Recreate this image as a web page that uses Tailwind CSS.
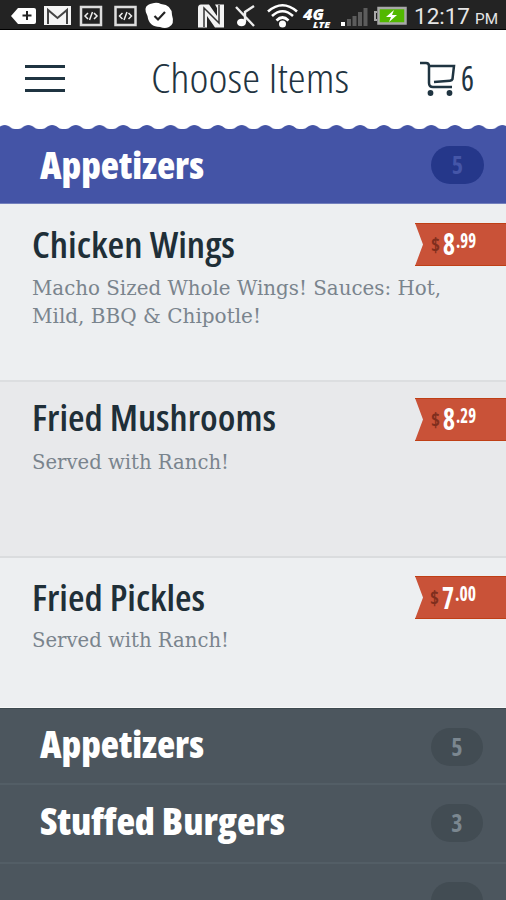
<!DOCTYPE html>
<html lang="en">
<head>
    <meta charset="UTF-8">
    <meta name="viewport" content="width=device-width, initial-scale=1.0">
    <title>Choose Items</title>
    <script src="https://cdn.jsdelivr.net/npm/@tailwindcss/browser@4"></script>
</head>
<body class="w-[506px] h-[900px] overflow-hidden bg-[#4c565e] font-['Open_Sans',sans-serif]">

    <!-- Status bar -->
    <div class="h-[30px] bg-[#232323] border-b border-black flex items-center">
        <svg class="w-[410px] h-[30px] shrink-0 overflow-visible" viewBox="0 0 410 30">
            <path d="M11 16 L18 8 H34 Q36 8 36 10 V22 Q36 24 34 24 H18 Z" fill="#fff"/>
            <path d="M27 11 V20 M22.500 15.500 H31.500" stroke="#222" stroke-width="2"/>
            <rect x="44" y="6" width="27" height="19" fill="#f4f4f4"/>
            <path d="M48 24 V10 L57.500 18 L67 10 V24" fill="none" stroke="#444" stroke-width="2"/>
            <g id="code">
                <rect x="81" y="7" width="20" height="18" fill="#222" stroke="#ddd" stroke-width="2.500"/>
                <path d="M88 13 L85 16 L88 19 M94 13 L97 16 L94 19 M92.500 12 L89.500 20" fill="none" stroke="#eee" stroke-width="1.500"/>
            </g>
            <use href="#code" x="34.500"/>
            <path d="M152 3.500 Q157 2 161 4 Q172 5 172 15 Q175 24 169 27 Q165 29 160 27 Q149 27 147.500 16 Q143 8 148 5 Q150 3.500 152 3.500 Z" fill="#fff"/>
            <path d="M154.500 16 L158 19.500 L165 12" fill="none" stroke="#222" stroke-width="2.200"/>
            <path d="M201 4.500 H209 L217 16 V8 L215 4.500 H224 V27.500 H215 L207 16 V27.500 H198 V8 Q198 4.500 201 4.500 Z" fill="#f2f2f2"/>
            <path d="M204 27 V8 L219 23 V5" fill="none" stroke="#333" stroke-width="1.500"/>
            <path d="M236 7 L254 26 M254 6 L245 12 V22" fill="none" stroke="#eee" stroke-width="2.400"/>
            <ellipse cx="241.500" cy="22.500" rx="4.500" ry="3.800" fill="#fff"/>
            <g fill="none" stroke="#fff" stroke-width="2.600">
                <path d="M268 11.500 Q282.500 -1 297 11.500"/>
                <path d="M272 16 Q282.500 6.500 293 16"/>
                <path d="M276.500 20.500 Q282.500 14.500 288.500 20.500"/>
            </g>
            <circle cx="282.500" cy="24" r="3.500" fill="#fff"/>
            <text x="303" y="20" font-size="15" font-weight="800" font-style="italic" fill="#fff" textLength="21" lengthAdjust="spacingAndGlyphs">4G</text>
            <text x="313" y="28" font-size="8" font-weight="800" font-style="italic" fill="#fff" textLength="17" lengthAdjust="spacingAndGlyphs">LTE</text>
            <rect x="341" y="22" width="4" height="4" fill="#fff"/>
            <path d="M347 26 V19 H351 V26 Z M352.500 26 V16 H356.500 V26 Z M358 26 V12 H362 V26 Z M363.500 26 V8 H367.500 V26 Z" fill="#5c5c5c"/>
            <rect x="378.500" y="8" width="27" height="15.500" fill="#52b800" stroke="#a8a8a8" stroke-width="2.500"/>
            <path d="M377 12 H375 V20 H377" fill="none" stroke="#a8a8a8" stroke-width="2"/>
            <path d="M394 10 L386 17 H391 L389 22 L397 15 H392 Z" fill="#fff"/>
        </svg>
        <svg class="w-[96px] h-[30px] shrink-0 overflow-visible font-['Roboto',sans-serif]" viewBox="410 0 96 30">
            <text x="414" y="24" font-size="22" fill="#e6e6e6" textLength="56" lengthAdjust="spacingAndGlyphs">12:17</text>
            <text x="475" y="24" font-size="15" fill="#e6e6e6" textLength="23" lengthAdjust="spacingAndGlyphs">PM</text>
        </svg>
    </div>

    <!-- Title bar -->
    <header class="h-[94px] bg-white flex items-start text-[#1f3441]">
        <button class="mt-[35px] ml-[25px] w-10 flex flex-col gap-[9px]" aria-label="Menu">
            <span class="h-[3px] bg-[#1f3441]"></span>
            <span class="h-[3px] bg-[#1f3441]"></span>
            <span class="h-[3px] bg-[#1f3441]"></span>
        </button>
        <h1 class="mt-[18px] ml-[86px] w-[200px]">
            <svg class="w-[200px] h-[60px] overflow-visible" viewBox="0 0 200 60">
                <text class="font-light [font-stretch:75%]" x="0" y="45" font-size="40" fill="currentColor" textLength="198" lengthAdjust="spacingAndGlyphs">Choose Items</text>
            </svg>
        </h1>
        <svg class="mt-[25px] ml-[69px] w-[60px] h-[50px] overflow-visible" viewBox="0 -5 60 50">
            <g fill="none" stroke="currentColor" stroke-width="2.500">
                <path d="M0 3 H6 Q9 3 9 6 V23 Q9 27 13 27 H32"/>
                <path d="M9 6 H34 L32.500 19 Q32 20.500 30 20.700 L14 22"/>
            </g>
            <circle cx="10.500" cy="33" r="2.900" fill="currentColor"/>
            <circle cx="29.500" cy="33" r="2.900" fill="currentColor"/>
            <text class="font-medium [font-stretch:75%]" x="41" y="31" font-size="34" fill="currentColor" textLength="13" lengthAdjust="spacingAndGlyphs">6</text>
        </svg>
    </header>

    <!-- Open section, with the scalloped top edge -->
    <section class="h-[80px] bg-[#4454a6] border-b border-[#7380bd]">
        <svg class="block w-[506px] h-[6px]" viewBox="0 0 506 6">
            <defs>
                <pattern id="scallop" x="4.700" width="23.700" height="6" patternUnits="userSpaceOnUse">
                    <path d="M0 0 V1 C5 1 6 5 10 5 H13.700 C17.700 5 18.700 1 23.700 1 V0 Z" fill="#fff"/>
                </pattern>
            </defs>
            <rect width="506" height="6" fill="url(#scallop)"/>
        </svg>
        <div class="flex items-start pl-10 pr-[22px] justify-between">
            <svg class="mt-[8px] w-[250px] h-[56px] overflow-visible" viewBox="0 0 250 56">
                <text class="font-extrabold [font-stretch:75%]" x="0" y="41" font-size="37" fill="#fff" textLength="164" lengthAdjust="spacingAndGlyphs">Appetizers</text>
            </svg>
            <span class="mt-4 w-[53px] h-[38px] rounded-full bg-[#25378a] text-[#4556a8] text-2xl font-bold [font-stretch:75%] flex items-center justify-center">5</span>
        </div>
    </section>

    <!-- Menu items -->
    <article class="h-[178px] bg-[#edeff1] border-b-2 border-[#dcdee0] flex justify-between">
        <div class="ml-8 mt-4">
            <svg class="block w-[300px] h-[50px] overflow-visible" viewBox="0 0 300 50">
                <text class="[font-weight:540] [font-stretch:75%]" x="0" y="38" font-size="36" fill="#1f2f38" textLength="203" lengthAdjust="spacingAndGlyphs">Chicken Wings</text>
            </svg>
            <svg class="block w-[380px] h-[70px] font-['DejaVu_Serif',serif] overflow-visible" viewBox="0 0 380 70">
                <text x="0" y="25" font-size="20.500" fill="#7a848d" textLength="409" lengthAdjust="spacingAndGlyphs">Macho Sized Whole Wings! Sauces: Hot,</text>
                <text x="0" y="53" font-size="20.500" fill="#7a848d" textLength="229" lengthAdjust="spacingAndGlyphs">Mild, BBQ &amp; Chipotle!</text>
            </svg>
        </div>
        <svg class="mt-[19px] w-[92px] h-[44px] overflow-visible" viewBox="0 0 92 44">
            <path d="M1 0 H92 V43 H1 L9 21.500 Z" fill="#c95238"/>
            <path d="M1 .5 H92 M1 42.500 H92" stroke="#bf3f16"/>
            <g class="font-bold [font-stretch:75%]">
                <text x="17" y="29" font-size="20" fill="#7f2e1d" textLength="9" lengthAdjust="spacingAndGlyphs">$</text>
                <text x="29" y="32" font-size="30" fill="#fff" textLength="12" lengthAdjust="spacingAndGlyphs">8</text>
                <text x="42" y="25" font-size="21" fill="#fff" textLength="20" lengthAdjust="spacingAndGlyphs">.99</text>
            </g>
        </svg>
    </article>

    <article class="h-[176px] bg-[#e8e9eb] border-b-2 border-[#dadcde] flex justify-between">
        <div class="ml-8 mt-[11px]">
            <svg class="block w-[300px] h-[50px] overflow-visible" viewBox="0 0 300 50">
                <text class="[font-weight:540] [font-stretch:75%]" x="0" y="38" font-size="36" fill="#1f2f38" textLength="244" lengthAdjust="spacingAndGlyphs">Fried Mushrooms</text>
            </svg>
            <svg class="block w-[300px] h-[40px] font-['DejaVu_Serif',serif] overflow-visible" viewBox="0 0 300 40">
                <text x="0" y="26" font-size="20.500" fill="#7a848d" textLength="197" lengthAdjust="spacingAndGlyphs">Served with Ranch!</text>
            </svg>
        </div>
        <svg class="mt-[16px] w-[92px] h-[44px] overflow-visible" viewBox="0 0 92 44">
            <path d="M1 0 H92 V43 H1 L9 21.500 Z" fill="#c95238"/>
            <path d="M1 .5 H92 M1 42.500 H92" stroke="#bf3f16"/>
            <g class="font-bold [font-stretch:75%]">
                <text x="17" y="29" font-size="20" fill="#7f2e1d" textLength="9" lengthAdjust="spacingAndGlyphs">$</text>
                <text x="29" y="32" font-size="30" fill="#fff" textLength="12" lengthAdjust="spacingAndGlyphs">8</text>
                <text x="42" y="25" font-size="21" fill="#fff" textLength="20" lengthAdjust="spacingAndGlyphs">.29</text>
            </g>
        </svg>
    </article>

    <article class="h-[150px] bg-[#edeff1] border-b border-[#f8f8f8] flex justify-between">
        <div class="ml-8 mt-[15px]">
            <svg class="block w-[300px] h-[50px] overflow-visible" viewBox="0 0 300 50">
                <text class="[font-weight:540] [font-stretch:75%]" x="0" y="38" font-size="36" fill="#1f2f38" textLength="173" lengthAdjust="spacingAndGlyphs">Fried Pickles</text>
            </svg>
            <svg class="block w-[300px] h-[40px] font-['DejaVu_Serif',serif] overflow-visible" viewBox="0 0 300 40">
                <text x="0" y="24" font-size="20.500" fill="#7a848d" textLength="197" lengthAdjust="spacingAndGlyphs">Served with Ranch!</text>
            </svg>
        </div>
        <svg class="mt-[18px] w-[92px] h-[44px] overflow-visible" viewBox="0 0 92 44">
            <path d="M1 0 H92 V43 H1 L9 21.500 Z" fill="#c95238"/>
            <path d="M1 .5 H92 M1 42.500 H92" stroke="#bf3f16"/>
            <g class="font-bold [font-stretch:75%]">
                <text x="16" y="29" font-size="20" fill="#7f2e1d" textLength="9" lengthAdjust="spacingAndGlyphs">$</text>
                <text x="28" y="33" font-size="30" fill="#fff" textLength="12" lengthAdjust="spacingAndGlyphs">7</text>
                <text x="41" y="25" font-size="21" fill="#fff" textLength="21" lengthAdjust="spacingAndGlyphs">.00</text>
            </g>
        </svg>
    </article>

    <!-- Closed sections -->
    <nav class="bg-[#4c565e]">
        <div class="h-[77px] border-t border-[#3d4a50] border-b-2 border-b-[#535e66] pl-10 pr-[23px] flex items-start justify-between">
            <svg class="mt-[8px] w-[250px] h-[56px] overflow-visible" viewBox="0 0 250 56">
                <text class="font-extrabold [font-stretch:75%]" x="0" y="41" font-size="37" fill="#fff" textLength="164" lengthAdjust="spacingAndGlyphs">Appetizers</text>
            </svg>
            <span class="mt-[19px] w-[52px] h-[38px] rounded-full bg-[#424c53] text-[#7b8790] text-2xl font-bold [font-stretch:75%] flex items-center justify-center">5</span>
        </div>
        <div class="h-[79px] border-b-2 border-[#535e66] pl-10 pr-[23px] flex items-start justify-between">
            <svg class="mt-[9px] w-[250px] h-[56px] overflow-visible" viewBox="0 0 250 56">
                <text class="font-extrabold [font-stretch:75%]" x="0" y="41" font-size="37" fill="#fff" textLength="245" lengthAdjust="spacingAndGlyphs">Stuffed Burgers</text>
            </svg>
            <span class="mt-[19px] w-[52px] h-[38px] rounded-full bg-[#424c53] text-[#7b8790] text-2xl font-bold [font-stretch:75%] flex items-center justify-center">3</span>
        </div>
        <div class="h-[77px] pr-[23px] flex justify-end">
            <span class="mt-[18px] w-[52px] h-[38px] rounded-full bg-[#424c53]"></span>
        </div>
    </nav>

</body>
</html>
